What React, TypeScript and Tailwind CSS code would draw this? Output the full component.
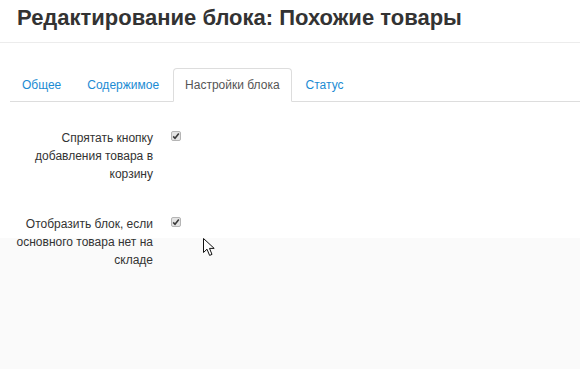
const tabs = ['Общее', 'Содержимое', 'Настройки блока', 'Статус']

const options = [
  'Спрятать кнопку добавления товара в корзину',
  'Отобразить блок, если основного товара нет на складе',
]

function CheckMark() {
  return (
    <span className="mt-[2px] flex h-[10px] w-[10px] items-center justify-center rounded-[2px] border border-[#b5b5b5] bg-[#e4e4e4]">
      <svg width="8" height="8" viewBox="0 0 8 8">
        <path d="M1.2 4.4 L3 6.2 L6.8 1.6" fill="none" stroke="#3a3a3a" strokeWidth="1.6" />
      </svg>
    </span>
  )
}

export default function App() {
  return (
    <div
      className="relative h-[369px] w-[580px] overflow-hidden bg-[linear-gradient(to_bottom,#ffffff_238px,#fafafa_238px)] text-[#333]"
      style={{ fontFamily: '"Liberation Sans", Arial, sans-serif' }}
    >
      <div className="h-[43px] border-b border-[#ececec] px-[17px] pt-[5px]">
        <h1 className="text-[22px] font-bold leading-[26px] text-[#333]">
          Редактирование блока: Похожие товары
        </h1>
      </div>

      <ul className="ml-[10px] mt-[25px] flex border-b border-[#dddddd]">
        {tabs.map((tab, i) => {
          const active = i === 2
          return (
            <li key={tab} className="-mb-px mr-[2px]">
              <span
                className={`block rounded-t-[4px] border px-[11px] py-[7px] text-[12px] leading-[18px] ${
                  active
                    ? 'border-[#dddddd] border-b-white bg-white text-[#555]'
                    : 'border-transparent text-[#1b8bd3]'
                }`}
              >
                {tab}
              </span>
            </li>
          )
        })}
      </ul>

      <div className="pt-[27px]">
        {options.map((label) => (
          <div key={label} className="mb-[32px] flex items-start gap-[18px]">
            <label className="w-[153px] pl-[10px] text-right text-[12px] leading-[18px] text-[#333]">
              {label}
            </label>
            <CheckMark />
          </div>
        ))}
      </div>

      <svg
        className="absolute left-[203px] top-[238px]"
        width="13"
        height="19"
        viewBox="0 0 13 19"
      >
        <path
          d="M0.5 0.5 L0.5 14.5 L4 11.2 L6.6 17.4 L9 16.4 L6.5 10.4 L11.2 10.4 Z"
          fill="#fff"
          stroke="#111"
          strokeWidth="1"
          strokeLinejoin="round"
        />
      </svg>
    </div>
  )
}
